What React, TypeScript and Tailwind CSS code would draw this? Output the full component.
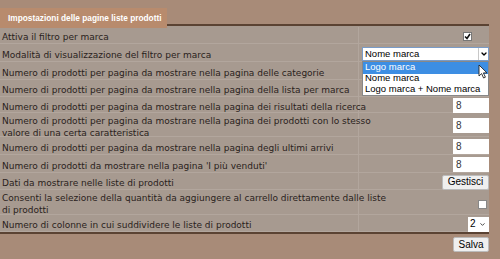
import { ChevronDown } from 'lucide-react';

type Row = {
  label: string[];
  control: 'check' | 'select' | 'none' | 'num' | 'button' | 'checkEmpty' | 'cols';
  h: string;
};

const ROWS: Row[] = [
  { label: ['Attiva il filtro per marca'], control: 'check', h: 'h-[17px]' },
  { label: ['Modalità di visualizzazione del filtro per marca'], control: 'select', h: 'h-[18px]' },
  { label: ['Numero di prodotti per pagina da mostrare nella pagina delle categorie'], control: 'none', h: 'h-[18px]' },
  { label: ['Numero di prodotti per pagina da mostrare nella pagina della lista per marca'], control: 'none', h: 'h-[17px]' },
  { label: ['Numero di prodotti per pagina da mostrare nella pagina dei risultati della ricerca'], control: 'num', h: 'h-[16px]' },
  {
    label: [
      'Numero di prodotti per pagina da mostrare nella pagina dei prodotti con lo stesso',
      'valore di una certa caratteristica',
    ],
    control: 'num',
    h: 'h-[24px]',
  },
  { label: ['Numero di prodotti per pagina da mostrare nella pagina degli ultimi arrivi'], control: 'num', h: 'h-[18px]' },
  { label: ["Numero di prodotti da mostrare nella pagina 'I più venduti'"], control: 'num', h: 'h-[18px]' },
  { label: ['Dati da mostrare nelle liste di prodotti'], control: 'button', h: 'h-[17px]' },
  {
    label: [
      'Consenti la selezione della quantità da aggiungere al carrello direttamente dalle liste',
      'di prodotti',
    ],
    control: 'checkEmpty',
    h: 'h-[25px]',
  },
  { label: ['Numero di colonne in cui suddividere le liste di prodotti'], control: 'cols', h: 'h-[17px]' },
];

const ctl = { fontFamily: '"Liberation Sans", Arial, sans-serif' };

function Control({ kind }: { kind: Row['control'] }) {
  if (kind === 'check')
    return (
      <div className="w-[9px] h-[9px] bg-white border border-[#777] flex items-center justify-center mr-[17px]">
        <svg width="7" height="7" viewBox="0 0 7 7">
          <path d="M1 3.5 L3 5.5 L6 1" stroke="#111" strokeWidth="1.6" fill="none" />
        </svg>
      </div>
    );
  if (kind === 'checkEmpty')
    return <div className="w-[9px] h-[9px] bg-white border border-[#888] mr-[2px] mt-[3px]" />;
  if (kind === 'select')
    return (
      <div
        className="relative w-[127px] h-[14px] bg-white border border-[#7a9cc8] flex items-center ml-auto"
        style={ctl}
      >
        <span className="pl-[2px] text-[9.5px] text-black leading-none flex-1 whitespace-nowrap">Nome marca</span>
        <div className="w-[10px] h-full flex items-center justify-center border-l border-[#c8c8c8]">
          <ChevronDown size={8} strokeWidth={4} className="text-black" />
        </div>
        <div className="absolute left-[-1px] top-[13px] w-[127px] bg-white border border-[#888] z-10 flex flex-col text-[9.5px] text-black whitespace-nowrap">
          <span className="bg-[#3d8ee3] text-white pl-[2px] h-[12px] flex items-center">Logo marca</span>
          <span className="pl-[2px] h-[10px] flex items-center">Nome marca</span>
          <span className="pl-[2px] h-[11px] flex items-center">Logo marca + Nome marca</span>
          <svg className="absolute left-[115px] top-[2px]" width="10" height="15" viewBox="0 0 10 15">
            <path d="M1 1 L1 12 L3.6 9.6 L5.6 14 L7.4 13.2 L5.4 8.9 L9 8.9 Z" fill="#fff" stroke="#222" strokeWidth="0.9" />
          </svg>
        </div>
      </div>
    );
  if (kind === 'num')
    return (
      <div
        className="w-[36px] h-[15px] bg-white flex items-center pl-[3px] text-[10px] text-[#333] leading-none"
        style={ctl}
      >
        8
      </div>
    );
  if (kind === 'button')
    return (
      <div
        className="w-[47px] h-[15px] bg-[#efefef] border border-[#bbb] rounded-[2px] flex items-center justify-center text-[10px] text-black leading-none"
        style={ctl}
      >
        Gestisci
      </div>
    );
  if (kind === 'cols')
    return (
      <div
        className="w-[21px] h-[15px] bg-white flex items-center gap-[3px] pl-[2px] text-[10px] text-black leading-none"
        style={ctl}
      >
        2
        <ChevronDown size={7} strokeWidth={3} className="text-[#333]" />
      </div>
    );
  return null;
}

export default function App() {
  return (
    <div
      className="w-[500px] h-[259px] bg-[#a88b78] overflow-hidden text-[#2a221c]"
      style={{ fontFamily: 'Tahoma, "DejaVu Sans", sans-serif' }}
    >
      <div className="h-[24px] pt-[4px]">
        <div
          className="inline-flex items-center h-[20px] pl-[8px] pr-[5px] bg-[#b88b6d] text-white font-bold text-[8.3px]"
          style={ctl}
        >
          Impostazioni delle pagine liste prodotti
        </div>
      </div>
      <div className="w-[489px] h-[2px] bg-[#5b4333]" />
      <div className="w-[489px] bg-[#a79a90] flex flex-col pt-[1px]">
        {ROWS.map((r, i) => (
          <div key={i} className={`flex ${r.h} border-b border-[#b2a69d]`}>
            <div className="w-[359px] pl-[2px] pt-[4px] flex flex-col justify-center text-[9px] leading-[12px] border-r border-[#b2a69d]">
              {r.label.map((l) => (
                <span key={l} className="whitespace-nowrap">
                  {l}
                </span>
              ))}
            </div>
            <div className="flex-1 flex items-center justify-end pt-[2px]">
              <Control kind={r.control} />
            </div>
          </div>
        ))}
      </div>
      <div className="w-[489px] h-[2px] bg-[#5b4333]" />
      <div className="w-[489px] flex justify-end pt-[3px]">
        <div
          className="w-[36px] h-[15px] bg-[#efefef] border border-[#bbb] rounded-[2px] flex items-center justify-center text-[10px] text-black leading-none"
          style={ctl}
        >
          Salva
        </div>
      </div>
    </div>
  );
}
